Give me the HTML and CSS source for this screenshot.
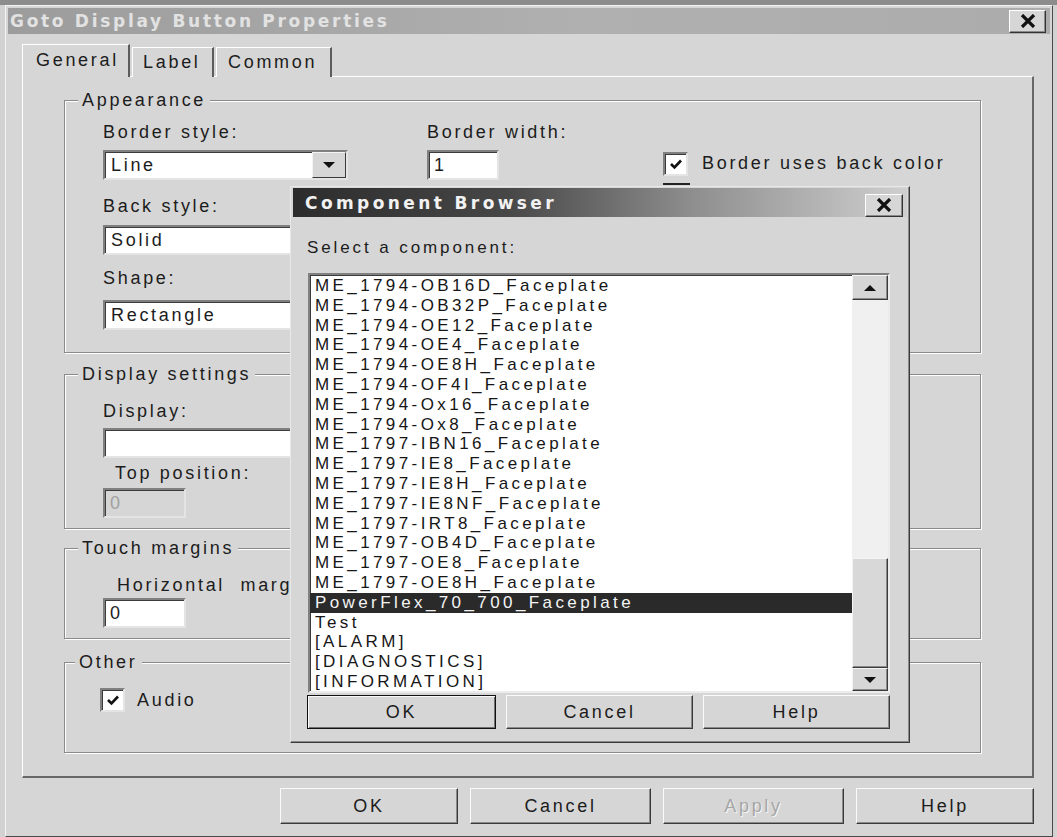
FILE: index.html
```html
<!DOCTYPE html>
<html lang="en">
<head>
    <meta charset="UTF-8">
    <title>Goto Display Button Properties</title>
    <link rel="stylesheet" href="styles.css">
</head>
<body>
<div class="backdrop"></div>
<div class="window">
    <div class="titlebar">
        <span class="title">Goto Display Button Properties</span>
        <div class="closeBtn">
            <svg width="18" height="14" viewBox="0 0 18 14"><path d="M3 1 L15 13 M15 1 L3 13" stroke="#111" stroke-width="3.2" fill="none"/></svg>
        </div>
    </div>
    <div class="main">
        <div class="tabs">
            <div class="tab active">General</div>
            <div class="tab">Label</div>
            <div class="tab">Common</div>
        </div>
        <div class="panel">
            <div class="group appearance">
                <div class="legend">Appearance</div>
                <div class="appGrid">
                    <div class="lbl">Border style:</div>
                    <div class="lbl">Border width:</div>
                    <div></div>
                    <div class="combo">
                        <span class="comboText">Line</span>
                        <div class="dropBtn"><svg width="14" height="8" viewBox="0 0 14 8"><path d="M1 1 L13 1 L7 7 Z" fill="#111"/></svg></div>
                    </div>
                    <div class="field widthField">1</div>
                    <div class="checkRow">
                        <div class="checkCol">
                            <div class="check"><svg width="14" height="12" viewBox="0 0 14 12"><path d="M2 6 L5.5 9.5 L12 2.5" stroke="#111" stroke-width="2.6" fill="none"/></svg></div>
                            <div class="focusLine"></div>
                        </div>
                        <span class="checkText">Border uses back color</span>
                    </div>
                </div>
                <div class="lbl backLbl">Back style:</div>
                <div class="combo solidCombo"><span class="comboText">Solid</span><div class="dropBtn"></div></div>
                <div class="lbl shapeLbl">Shape:</div>
                <div class="combo shapeCombo"><span class="comboText">Rectangle</span><div class="dropBtn"></div></div>
            </div>

            <div class="group display">
                <div class="legend">Display settings</div>
                <div class="lbl displayLbl">Display:</div>
                <div class="field displayField"></div>
                <div class="lbl topLbl">Top position:</div>
                <div class="field small disabled">0</div>
            </div>

            <div class="group touch">
                <div class="legend">Touch margins</div>
                <div class="lbl horizLbl">Horizontal&nbsp; margin:</div>
                <div class="field small">0</div>
            </div>

            <div class="group other">
                <div class="legend">Other</div>
                <div class="checkRow audioRow">
                    <div class="check"><svg width="14" height="12" viewBox="0 0 14 12"><path d="M2 6 L5.5 9.5 L12 2.5" stroke="#111" stroke-width="2.6" fill="none"/></svg></div>
                    <span>Audio</span>
                </div>
            </div>
        </div>
        <div class="actions">
            <div class="btn okBtn">OK</div>
            <div class="btn cancelBtn">Cancel</div>
            <div class="btn applyBtn">Apply</div>
            <div class="btn helpBtn">Help</div>
        </div>
    </div>
</div>

<div class="browser">
    <div class="browserTitle">
        <span class="title2">Component Browser</span>
        <div class="closeBtn small">
            <svg width="18" height="14" viewBox="0 0 18 14"><path d="M3 1 L15 13 M15 1 L3 13" stroke="#111" stroke-width="3.2" fill="none"/></svg>
        </div>
    </div>
    <div class="browserBody">
        <div class="selectLbl">Select a component:</div>
        <div class="listBox">
            <div class="items" id="items"></div>
            <div class="scrollBar">
                <div class="arrowBtn"><svg width="14" height="8" viewBox="0 0 14 8"><path d="M1 7 L13 7 L7 1 Z" fill="#111"/></svg></div>
                <div class="track"></div>
                <div class="thumb"></div>
                <div class="arrowBtn down"><svg width="14" height="8" viewBox="0 0 14 8"><path d="M1 1 L13 1 L7 7 Z" fill="#111"/></svg></div>
            </div>
        </div>
        <div class="browserActions">
            <div class="btn defaultBtn">OK</div>
            <div class="btn">Cancel</div>
            <div class="btn">Help</div>
        </div>
    </div>
</div>

<script>
    let components = [
        'ME_1794-OB16D_Faceplate', 'ME_1794-OB32P_Faceplate', 'ME_1794-OE12_Faceplate',
        'ME_1794-OE4_Faceplate', 'ME_1794-OE8H_Faceplate', 'ME_1794-OF4I_Faceplate',
        'ME_1794-Ox16_Faceplate', 'ME_1794-Ox8_Faceplate', 'ME_1797-IBN16_Faceplate',
        'ME_1797-IE8_Faceplate', 'ME_1797-IE8H_Faceplate', 'ME_1797-IE8NF_Faceplate',
        'ME_1797-IRT8_Faceplate', 'ME_1797-OB4D_Faceplate', 'ME_1797-OE8_Faceplate',
        'ME_1797-OE8H_Faceplate', 'PowerFlex_70_700_Faceplate', 'Test',
        '[ALARM]', '[DIAGNOSTICS]', '[INFORMATION]'
    ];
    let selectedIndex = 16;
    let data = '';
    for (let i = 0; i < components.length; i++) {
        let cls = i === selectedIndex ? 'item selected' : 'item';
        data += `<div class="${cls}">${components[i]}</div>`;
    }
    document.getElementById("items").innerHTML = data;
</script>
</body>
</html>
```
FILE: styles.css
```css
*{
    box-sizing: border-box;
}
body{
    margin: 0;
    background-color: #d2d2d2;
    font-family: "Liberation Sans", Arial, sans-serif;
    font-size: 18px;
    letter-spacing: 2.7px;
    color: #1c1c1c;
}
.backdrop{
    height: 5px;
    background-color: #8c8c8c;
}
.window{
    margin-left: 5px;
    width: 1048px;
    height: 832px;
    background-color: #d6d6d6;
    border: 1px solid;
    border-color: #f4f4f4 #4a4a4a #4a4a4a #f4f4f4;
    padding: 2px;
}
.titlebar{
    height: 26px;
    display: flex;
    align-items: center;
    justify-content: space-between;
    padding: 0 4px 0 2px;
    background: linear-gradient(to right, #9c9c9c, #b0b0b0 55%, #acacac);
}
.title{
    font-family: "DejaVu Sans", sans-serif;
    font-weight: bold;
    font-size: 17px;
    letter-spacing: 2.7px;
    color: #e2e2e2;
}
.closeBtn{
    width: 37px;
    height: 23px;
    display: flex;
    align-items: center;
    justify-content: center;
    background-color: #d6d6d6;
    border: 1px solid;
    border-color: #fff #333 #333 #fff;
    box-shadow: inset -1px -1px 0 #8a8a8a;
}
.main{
    padding: 11px 16px 0 14px;
}
.tabs{
    display: flex;
    align-items: flex-end;
    height: 32px;
    margin-bottom: -1px;
}
.tab{
    height: 30px;
    line-height: 29px;
    padding-left: 10px;
    border-top: 1px solid #fff;
    border-left: 1px solid #fff;
    border-right: 2px solid #5c5c5c;
    background-color: #d6d6d6;
    margin-right: 2px;
}
.tab:nth-child(2){
    width: 82px;
}
.tab:nth-child(3){
    width: 116px;
    padding-left: 11px;
}
.tab.active{
    width: 108px;
    height: 33px;
    line-height: 31px;
    padding-left: 13px;
    position: relative;
    z-index: 1;
}
.panel{
    height: 702px;
    border-style: solid;
    border-width: 1px 2px 2px 1px;
    border-color: #fff #686868 #686868 #fff;
    padding: 23px 0 0 41px;
}
.group{
    width: 917px;
    border: 1px solid #8a8a8a;
    box-shadow: inset 1px 1px 0 #fff, 1px 1px 0 #fff;
    padding-left: 38px;
}
.legend{
    display: table;
    margin: -11px 0 0 -25px;
    padding: 0 4px;
    line-height: 20px;
    background-color: #d6d6d6;
}
.lbl{
    line-height: 20px;
    white-space: nowrap;
}
.appearance{
    height: 253px;
}
.appGrid{
    display: grid;
    grid-template-columns: 324px 236px auto;
    row-gap: 8px;
    margin-top: 12px;
}
.combo{
    width: 245px;
    height: 30px;
    display: flex;
    background-color: #fff;
    border: 2px solid;
    border-color: #808080 #e4e4e4 #e4e4e4 #808080;
    box-shadow: inset 1px 1px 0 #3c3c3c;
}
.comboText{
    padding-left: 6px;
    line-height: 26px;
}
.dropBtn{
    margin-left: auto;
    width: 34px;
    height: 100%;
    display: flex;
    align-items: center;
    justify-content: center;
    background-color: #d6d6d6;
    border: 1px solid;
    border-color: #f4f4f4 #3a3a3a #3a3a3a #f4f4f4;
}
.field{
    height: 30px;
    background-color: #fff;
    border: 2px solid;
    border-color: #808080 #e4e4e4 #e4e4e4 #808080;
    box-shadow: inset 1px 1px 0 #3c3c3c;
    padding-left: 5px;
    line-height: 26px;
}
.widthField{
    width: 72px;
}
.checkRow{
    display: flex;
    align-items: center;
    gap: 12px;
}
.checkCol{
    align-self: flex-start;
    display: flex;
    flex-direction: column;
    gap: 7px;
    margin: 2px 0 -5px 0;
}
.checkText{
    margin-top: -3px;
}
.check{
    width: 25px;
    height: 24px;
    display: flex;
    align-items: center;
    justify-content: center;
    background-color: #fff;
    border: 2px solid;
    border-color: #808080 #e4e4e4 #e4e4e4 #808080;
    box-shadow: inset 1px 1px 0 #3c3c3c;
}
.focusLine{
    width: 27px;
    height: 2px;
    background-color: #222;
}
.backLbl{
    margin-top: 16px;
}
.solidCombo{
    margin-top: 9px;
}
.shapeLbl{
    margin-top: 13px;
}
.shapeCombo{
    margin-top: 12px;
}
.display{
    height: 155px;
    margin-top: 21px;
}
.displayLbl{
    margin-top: 17px;
}
.displayField{
    width: 245px;
    margin-top: 7px;
}
.topLbl{
    margin: 5px 0 0 12px;
}
.small{
    width: 83px;
    margin-top: 5px;
}
.disabled{
    background-color: #d6d6d6;
    color: #a0a0a0;
}
.touch{
    height: 91px;
    margin-top: 19px;
}
.horizLbl{
    margin: 17px 0 0 14px;
}
.touch .small{
    margin-top: 3px;
}
.other{
    height: 91px;
    margin-top: 23px;
    padding-left: 35px;
}
.audioRow{
    margin-top: 16px;
}
.actions{
    display: flex;
    justify-content: flex-end;
    gap: 12px;
    margin-top: 10px;
}
.btn{
    height: 36px;
    display: flex;
    align-items: center;
    justify-content: center;
    background-color: #d6d6d6;
    border: 1px solid;
    border-color: #fafafa #3a3a3a #3a3a3a #fafafa;
    box-shadow: inset -1px -1px 0 #8a8a8a;
}
.okBtn, .helpBtn{
    width: 178px;
}
.cancelBtn, .applyBtn{
    width: 181px;
}
.applyBtn{
    color: #a6a6a6;
    text-shadow: 1px 1px 0 #f6f6f6;
}

/* component browser window on top */
.browser{
    position: absolute;
    left: 290px;
    top: 186px;
    width: 620px;
    height: 557px;
    background-color: #d6d6d6;
    border: 1px solid;
    border-color: #e8e8e8 #3a3a3a #3a3a3a #e8e8e8;
    box-shadow: inset -1px -1px 0 #8a8a8a;
    padding: 1px 2px 2px 2px;
}
.browserTitle{
    height: 29px;
    display: flex;
    align-items: center;
    justify-content: space-between;
    padding: 0 4px 0 12px;
    background: linear-gradient(to right, #2c2c2c 0%, #474747 35%, #8e8e8e 65%, #cfcfcf 100%);
}
.title2{
    font-family: "DejaVu Sans", sans-serif;
    font-weight: bold;
    font-size: 17px;
    letter-spacing: 3.4px;
    color: #f2f2f2;
}
.closeBtn.small{
    width: 38px;
    height: 23px;
}
.browserBody{
    padding-left: 14px;
    font-size: 17px;
    letter-spacing: 2.9px;
}
.selectLbl{
    margin-top: 21px;
    line-height: 20px;
}
.listBox{
    margin: 15px 0 0 1px;
    width: 582px;
    height: 420px;
    display: flex;
    background-color: #fff;
    border: 2px solid;
    border-color: #808080 #ececec #ececec #808080;
    box-shadow: inset 1px 1px 0 #3c3c3c;
    overflow: hidden;
}
.items{
    flex: 1;
    padding-top: 1px;
}
.item{
    line-height: 19.8px;
    padding-left: 5px;
    letter-spacing: 3.4px;
    white-space: nowrap;
    color: #161616;
}
.item.selected{
    background-color: #2a2a2a;
    color: #f4f4f4;
}
.scrollBar{
    width: 36px;
    display: flex;
    flex-direction: column;
}
.arrowBtn{
    height: 25px;
    display: flex;
    align-items: center;
    justify-content: center;
    background-color: #d6d6d6;
    border: 1px solid;
    border-color: #f4f4f4 #3a3a3a #3a3a3a #f4f4f4;
    box-shadow: inset -1px -1px 0 #8a8a8a;
}
.arrowBtn.down{
    height: 23px;
}
.track{
    flex: 1;
    background-color: #f0f0f0;
}
.thumb{
    height: 110px;
    background-color: #d8d8d8;
    border: 1px solid;
    border-color: #f4f4f4 #3a3a3a #3a3a3a #f4f4f4;
    box-shadow: inset -1px -1px 0 #8a8a8a;
}
.browserActions{
    display: flex;
    gap: 10px;
    margin-top: 2px;
}
.browserActions .btn{
    width: 187px;
    height: 34px;
    font-size: 18px;
    letter-spacing: 2.7px;
}
.browserActions .defaultBtn{
    width: 189px;
    border: 1px solid #111;
    box-shadow: inset 1px 1px 0 #fafafa, inset -1px -1px 0 #707070;
}
```
